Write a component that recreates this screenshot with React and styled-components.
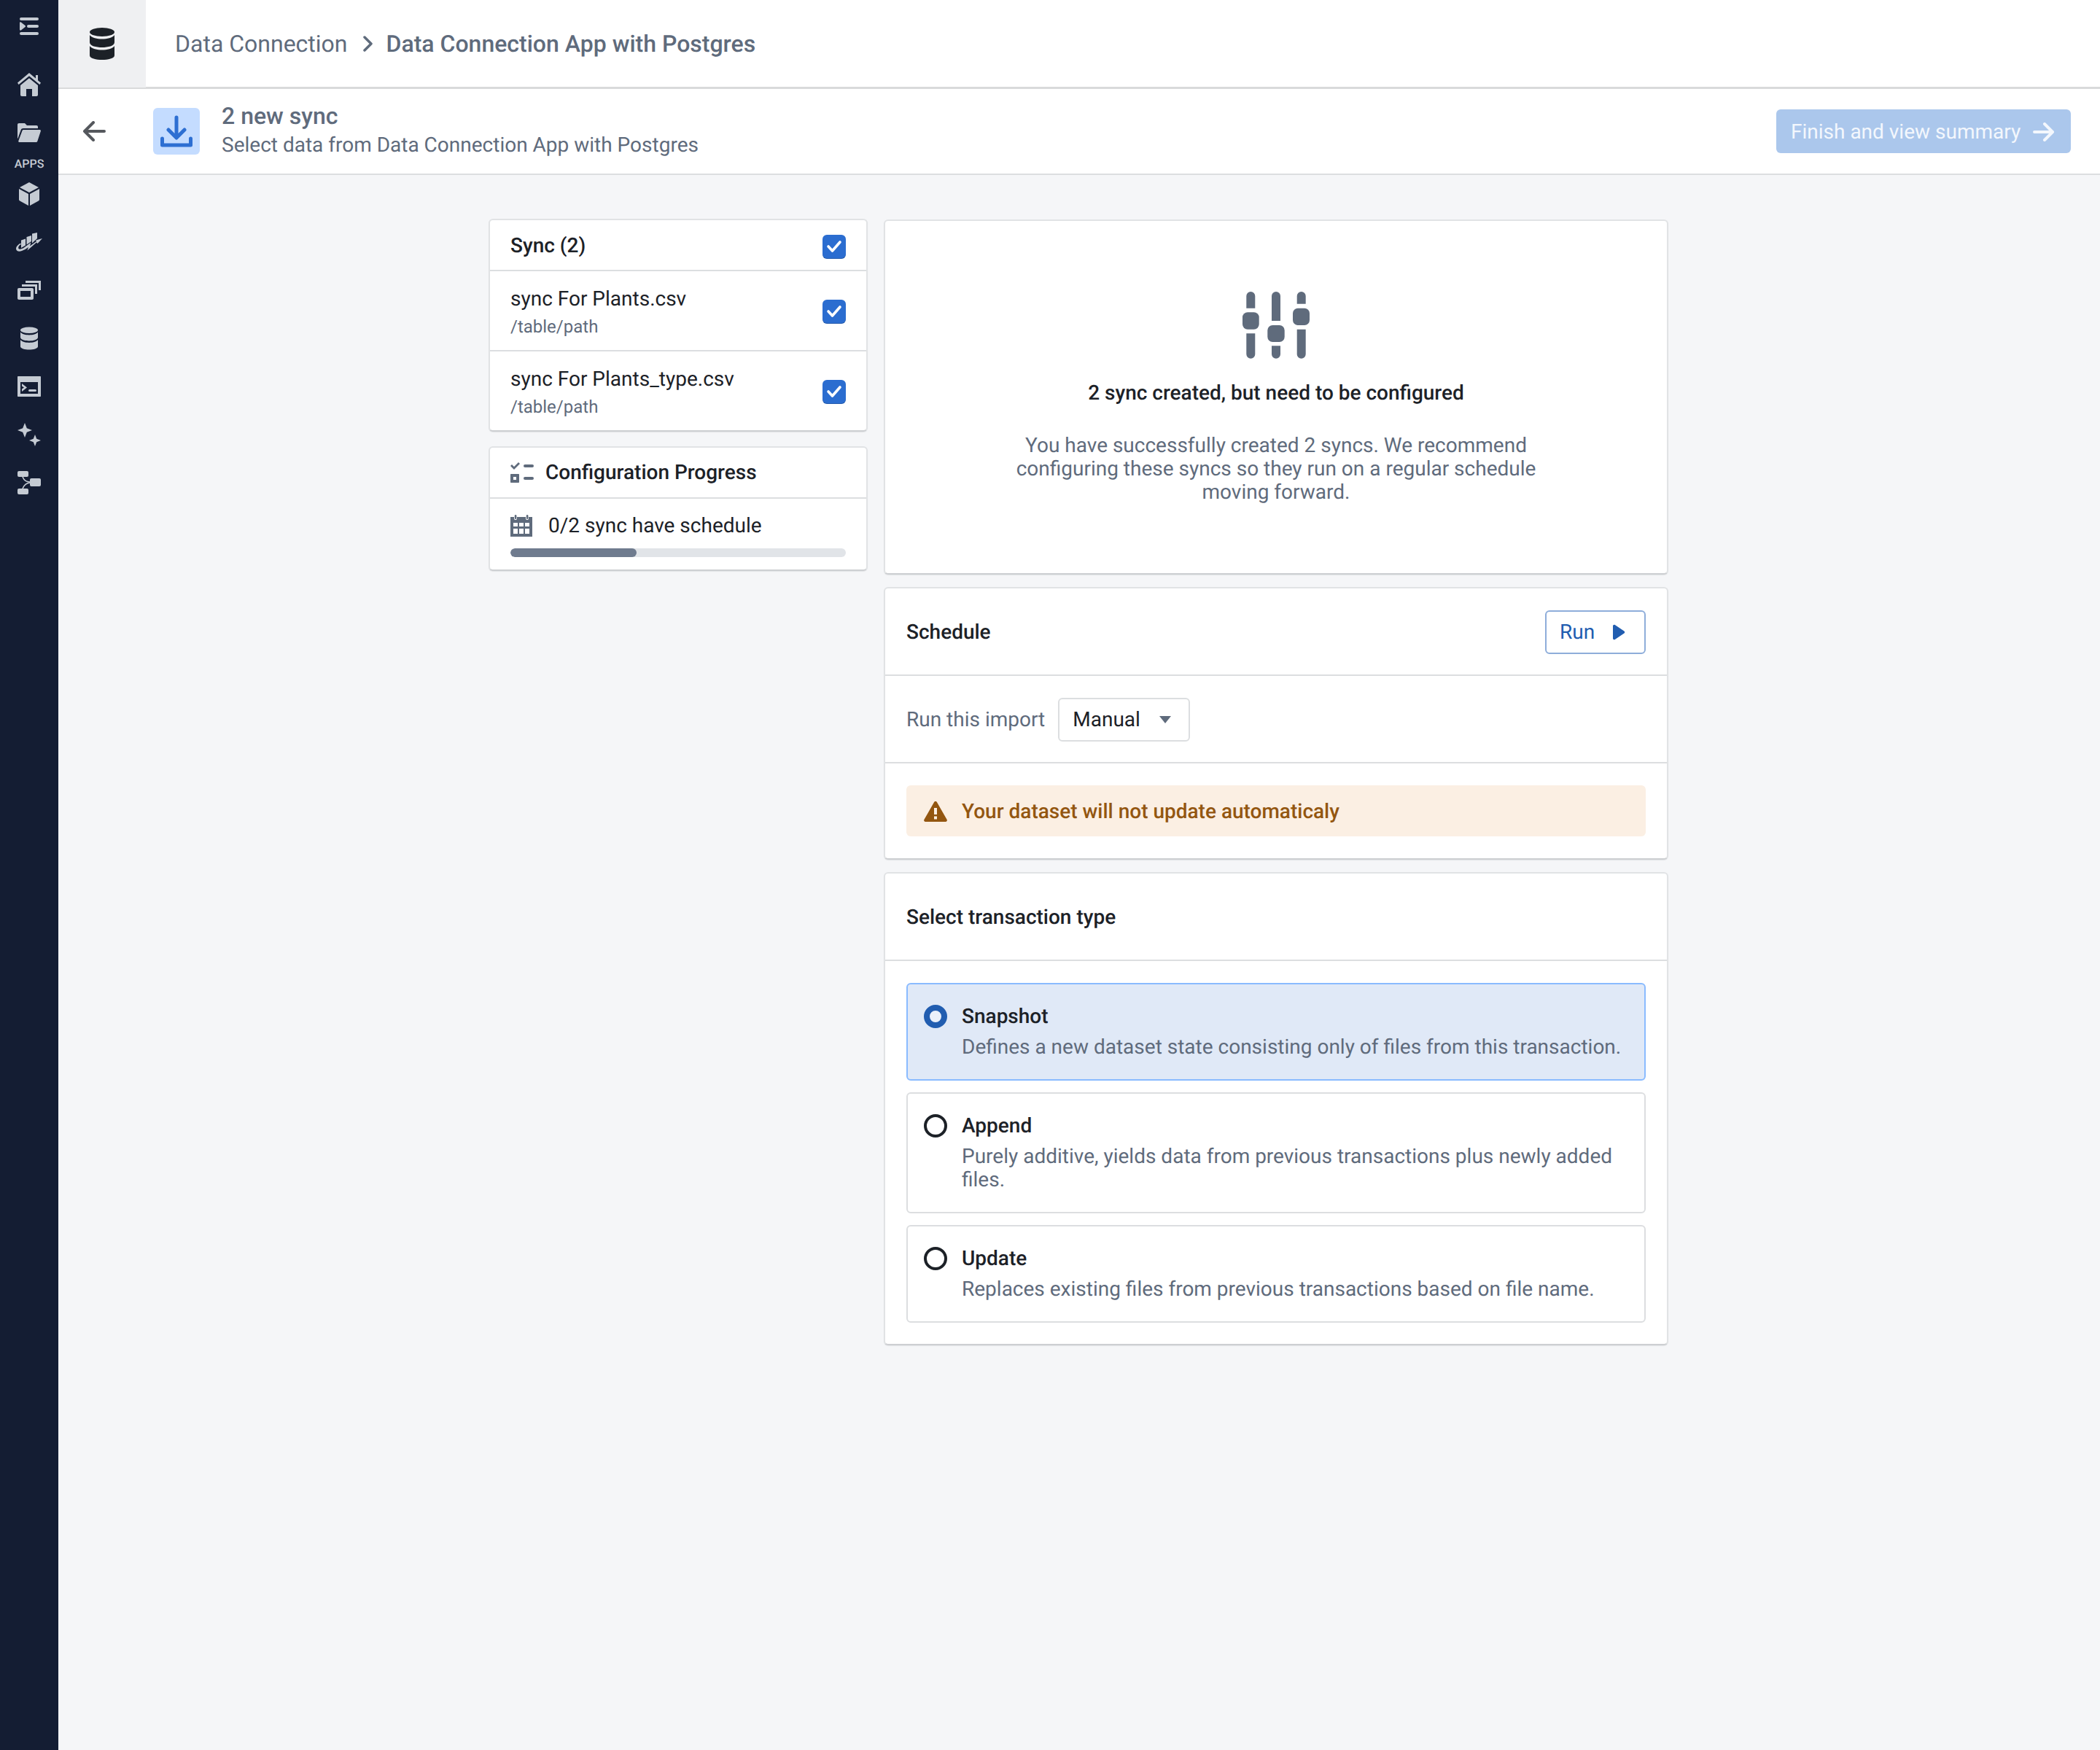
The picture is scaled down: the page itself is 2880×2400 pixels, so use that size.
import React from 'react'
import styled, { createGlobalStyle } from 'styled-components'

const GlobalStyle = createGlobalStyle`
    * {
        box-sizing: border-box;
    }
    body {
        margin: 0;
        background: #f5f6f8;
        font-family: Roboto, "Liberation Sans", sans-serif;
        font-size: 28px;
        line-height: 32px;
        color: #1c2127;
        text-rendering: geometricPrecision;
    }
`

const Page = styled.div`
    display: flex;
    min-height: 2400px;
`

const Sidebar = styled.nav`
    flex: 0 0 80px;
    display: flex;
    flex-direction: column;
    align-items: center;
    padding-top: 3px;
    background: #141d33;
    color: #c5cbd3;
`

const NavItem = styled.div`
    width: 100%;
    height: 66px;
    flex: none;
    display: flex;
    align-items: center;
    justify-content: center;
    margin-bottom: ${props => props.$gap || 0}px;
`

const NavLabel = styled.div`
    height: 18px;
    font-size: 16px;
    line-height: 20px;
    font-weight: 500;
    color: #c5cbd3;
`

const Main = styled.div`
    flex: 1;
    min-width: 0;
    display: flex;
    flex-direction: column;
`

const TopBar = styled.header`
    height: 122px;
    flex: none;
    display: flex;
    align-items: center;
    background: #fff;
    border-bottom: 3px solid #d9dadb;
`

const AppCell = styled.div`
    width: 120px;
    height: 120px;
    align-self: flex-start;
    display: flex;
    align-items: center;
    justify-content: center;
    background: #eff0f2;
    color: #1c2127;
`

const Crumbs = styled.div`
    display: flex;
    align-items: center;
    margin-left: 40px;
    font-size: 32px;
    line-height: 40px;
    color: #5f6b7c;
`

const CrumbCurrent = styled.span`
    font-weight: 500;
`

const CrumbSeparator = styled.span`
    display: flex;
    margin: 0 19px 0 20px;
`

const SubHeader = styled.div`
    height: 118px;
    flex: none;
    display: flex;
    align-items: center;
    padding: 0 40px 0 34px;
    background: #fff;
    border-bottom: 2px solid #dcdee0;
`

const BackButton = styled.div`
    width: 32px;
    display: flex;
    color: #55585d;
`

const Tile = styled.div`
    width: 64px;
    height: 64px;
    margin-left: 64px;
    display: flex;
    align-items: center;
    justify-content: center;
    border-radius: 6px;
    background: #c4dcff;
    color: #2d6fd2;
`

const HeaderText = styled.div`
    flex: 1;
    margin-left: 30px;
`

const HeaderTitle = styled.div`
    margin-bottom: 4px;
    font-size: 32px;
    line-height: 34px;
    font-weight: 500;
    color: #5f6b7c;
`

const HeaderSub = styled.div`
    font-size: 28px;
    line-height: 38px;
    color: #5f6b7c;
`

const FinishButton = styled.div`
    width: 404px;
    height: 60px;
    display: flex;
    align-items: center;
    justify-content: space-between;
    padding: 1px 22px 0 20px;
    border-radius: 6px;
    background: #abc7ec;
    color: #f3f7fd;
    font-size: 28px;
`

const Content = styled.main`
    flex: 1;
    display: flex;
    justify-content: center;
    align-items: flex-start;
    gap: 22px;
    padding: 60px 2px 0 0;
`

const Column = styled.div`
    width: ${props => props.$width}px;
    margin-top: ${props => props.$top || 0}px;
    display: flex;
    flex-direction: column;
    gap: ${props => props.$gap}px;
`

const Card = styled.section`
    background: #fff;
    border: 2px solid #e1e3e5;
    border-bottom-color: #cdcfd2;
    border-radius: 6px;
    box-shadow: 0 1px 1px rgba(17, 20, 24, 0.08);
`

const ListHeader = styled.div`
    height: 70px;
    display: flex;
    align-items: center;
    justify-content: space-between;
    padding: 2px 28px 0;
    border-bottom: 2px solid #dcdee0;
    font-weight: 500;
`

const ListRow = styled.div`
    height: ${props => (props.$last ? 108 : 110)}px;
    display: flex;
    align-items: center;
    justify-content: space-between;
    padding: 0 28px;
    border-bottom: ${props => (props.$last ? 'none' : '2px solid #dcdee0')};
`

const RowTitle = styled.div`
    line-height: 44px;
`

const RowPath = styled.div`
    font-size: 24px;
    line-height: 32px;
    color: #5f6b7c;
`

const Checkbox = styled.div`
    width: 32px;
    height: 33px;
    flex: none;
    margin-top: 2px;
    display: flex;
    align-items: center;
    justify-content: center;
    border-radius: 6px;
    background: #2b6dd0;
    box-shadow: inset 0 -1px 0 rgba(17, 20, 24, 0.2);
    color: #fff;
`

const ProgressHeader = styled.div`
    height: 70px;
    display: flex;
    align-items: center;
    gap: 16px;
    padding: 0 28px;
    border-bottom: 2px solid #dcdee0;
    font-weight: 500;
    color: #5f6b7c;
`

const ProgressTitle = styled.span`
    color: #1c2127;
`

const ProgressBody = styled.div`
    padding: 17px 28px;
`

const ProgressLine = styled.div`
    display: flex;
    align-items: center;
    gap: 22px;
    height: 40px;
    margin-bottom: 11px;
`

const ProgressIcon = styled.span`
    display: flex;
    color: #5f6b7c;
`

const Track = styled.div`
    height: 12px;
    border-radius: 6px;
    background: #e1e4e8;
    overflow: hidden;
`

const Fill = styled.div`
    height: 100%;
    border-radius: 6px;
    background: #6f7b8e;
`

const EmptyState = styled.div`
    height: 483px;
    display: flex;
    flex-direction: column;
    align-items: center;
    padding-top: 97px;
    text-align: center;
    color: #5f6b7c;
`

const EmptyTitle = styled.div`
    margin: 31px 0 40px;
    font-weight: 500;
    line-height: 32px;
    color: #1c2127;
`

const EmptyText = styled.div`
    width: 740px;
    line-height: 32px;
`

const SectionHeader = styled.div`
    height: 120px;
    display: flex;
    align-items: center;
    justify-content: space-between;
    padding: 2px 29px 0;
    border-bottom: 2px solid #dcdee0;
    font-weight: 500;
`

const RunButton = styled.div`
    width: 138px;
    height: 60px;
    display: flex;
    align-items: center;
    justify-content: space-between;
    padding: 0 26px 0 18px;
    border: 2px solid #8eadda;
    border-radius: 6px;
    font-weight: 400;
    color: #215db0;
`

const ImportRow = styled.div`
    height: 120px;
    display: flex;
    align-items: center;
    gap: 18px;
    padding: 2px 29px 0;
    border-bottom: 2px solid #dcdee0;
    color: #5f6b7c;
`

const SelectBox = styled.div`
    width: 181px;
    height: 60px;
    display: flex;
    align-items: center;
    justify-content: space-between;
    padding: 0 24px 0 18px;
    border: 2px solid #dcdee0;
    border-radius: 6px;
    color: #1c2127;
`

const Caret = styled.span`
    display: flex;
    color: #5f6b7c;
`

const BannerWrap = styled.div`
    padding: 30px 29px;
`

const Banner = styled.div`
    height: 70px;
    display: flex;
    align-items: center;
    gap: 20px;
    padding: 2px 24px 0;
    border-radius: 6px;
    background: #fbefe3;
    color: #935610;
    font-weight: 500;
`

const Options = styled.div`
    display: flex;
    flex-direction: column;
    gap: 16px;
    padding: 30px 29px 29px;
`

const Option = styled.div`
    display: flex;
    align-items: flex-start;
    gap: 20px;
    padding: 28px 22px 28px;
    border: 2px solid ${props => (props.$selected ? '#8abbff' : '#dcdee0')};
    border-radius: 6px;
    background: ${props => (props.$selected ? '#e0e9f7' : '#fff')};
`

const Radio = styled.span`
    width: 32px;
    height: 32px;
    flex: none;
    border-radius: 50%;
    background: ${props => (props.$selected ? '#eaf0fa' : '#fff')};
    border: ${props => (props.$selected ? '8px solid #215db0' : '4px solid #1c2127')};
`

const OptionTitle = styled.div`
    font-weight: 500;
    line-height: 32px;
    margin-bottom: 10px;
`

const OptionText = styled.div`
    line-height: 32px;
    color: #5f6b7c;
`

const MenuIcon = () => (
    <svg width="26" height="24" viewBox="0 0 26 24" fill="currentColor">
        <rect x="0" y="0" width="26" height="4" rx="2" />
        <rect x="10" y="10" width="16" height="4" rx="2" />
        <rect x="0" y="20" width="26" height="4" rx="2" />
        <path d="M0 7.5 C0 6.5 1 6 1.8 6.6 L7.5 11 C8.2 11.5 8.2 12.5 7.5 13 L1.8 17.4 C1 18 0 17.5 0 16.5 Z" />
    </svg>
)

const HomeIcon = () => (
    <svg width="32" height="32" viewBox="0 0 32 32" fill="currentColor">
        <path d="M16 0 L25 7.6 V3 H28 V10.2 L32 13.6 L30.4 16 L16 4.2 L1.6 16 L0 13.6 Z" />
        <path d="M16 7.2 L28 17 V30 C28 31.2 27.2 32 26 32 H20 V22 H12 V32 H6 C4.8 32 4 31.2 4 30 V17 Z" />
    </svg>
)

const FolderIcon = () => (
    <svg width="32" height="26" viewBox="0 0 32 26" fill="currentColor">
        <path d="M0 2 C0 .8 .8 0 2 0 H10 L13 3 H26 C27.2 3 28 3.8 28 5 V7 H8 C6.2 7 5.2 7.8 4.6 9.4 L.6 20.6 L0 21 Z" />
        <path d="M8.6 9 H30.4 C31.6 9 32.2 10 31.8 11 L27.4 24.4 C27 25.4 26.2 26 25.2 26 H2.6 C1.6 26 1 25 1.4 24 L6.4 10.4 C6.8 9.4 7.6 9 8.6 9 Z" />
    </svg>
)

const CubeIcon = () => (
    <svg width="28" height="32" viewBox="0 0 28 32" fill="currentColor">
        <path d="M14 0 L27 7 L14 14 L1 7 Z" />
        <path d="M0 9 L13 16 V32 L1.2 25.6 C.4 25.2 0 24.6 0 23.8 Z" />
        <path d="M28 9 L15 16 V32 L26.8 25.6 C27.6 25.2 28 24.6 28 23.8 Z" />
    </svg>
)

const ChartIcon = () => (
    <svg width="36" height="26" viewBox="0 0 36 26" fill="currentColor">
        <path d="M7 10.5 L13 8.5 V17.5 L7 21 Z" />
        <path d="M14.5 6 L21 4 V12 L14.5 16.5 Z" />
        <path d="M22 1.5 L29 0 V8 L22 14.5 Z" />
        <path d="M6.5 14.5 C2 16.5 0 20 0 22 C0 25.5 4 26.5 8 25 C11 24 14 22 17 20 L15.5 24.5 L28 13.5 L29.5 15 L36 8 L27 10.5 L28 12 L19 18.5 L20.5 13.5 L11 20.5 C8 22.5 4.5 23.5 3.5 22 C2.5 20.5 4 17 6.5 16.5 Z" />
    </svg>
)

const StackIcon = () => (
    <svg width="32" height="26" viewBox="0 0 32 26" fill="currentColor">
        <path fillRule="evenodd" d="M2 10 H20 C21.2 10 22 10.8 22 12 V24 C22 25.2 21.2 26 20 26 H2 C.8 26 0 25.2 0 24 V12 C0 10.8 .8 10 2 10 Z M4 14 V22 H18 V14 Z" />
        <path d="M6 5 H27 V18 H24 V8 H6 Z" />
        <path d="M11 0 H32 V13 H29 V3 H11 Z" />
    </svg>
)

const DatabaseIcon = ({ width, height }) => (
    <svg width={width} height={height} viewBox="0 0 34 44" fill="currentColor">
        <ellipse cx="17" cy="6" rx="17" ry="6" />
        <path d="M0 10 C3 14 10 15.5 17 15.5 C24 15.5 31 14 34 10 V20 C34 25 25 27 17 27 C9 27 0 25 0 20 Z" />
        <path d="M0 25 C3 29 10 30.5 17 30.5 C24 30.5 31 29 34 25 V38 C34 42 25 44 17 44 C9 44 0 42 0 38 Z" />
    </svg>
)

const TerminalIcon = () => (
    <svg width="32" height="28" viewBox="0 0 32 28" fill="currentColor">
        <path fillRule="evenodd" d="M1 0 H31 C31.6 0 32 .4 32 1 V27 C32 27.6 31.6 28 31 28 H1 C.4 28 0 27.6 0 27 V1 C0 .4 .4 0 1 0 Z M4 8 V24 H28 V8 Z" />
        <path d="M6 10 L13 15.5 L6 21 V17.5 L9 15.5 L6 13.5 Z" />
        <rect x="15" y="18" width="11" height="3" rx="1.5" />
    </svg>
)

const SparkIcon = () => (
    <svg width="32" height="32" viewBox="0 0 32 32" fill="currentColor">
        <path d="M10 0 L12.8 7.2 L20 10 L12.8 12.8 L10 20 L7.2 12.8 L0 10 L7.2 7.2 Z" />
        <path d="M24 16 L26.2 21.8 L32 24 L26.2 26.2 L24 32 L21.8 26.2 L16 24 L21.8 21.8 Z" />
    </svg>
)

const FlowIcon = () => (
    <svg width="32" height="32" viewBox="0 0 32 32" fill="currentColor">
        <rect x="0" y="0" width="15" height="8" rx="2" />
        <rect x="0" y="24" width="15" height="8" rx="2" />
        <rect x="17" y="10" width="15" height="11" rx="2" />
        <path d="M7 8 C9 13 12 15 17 15 M7 24 C9 19 12 16.5 17 16" fill="none" stroke="currentColor" strokeWidth="1.6" />
    </svg>
)

const BackArrow = () => (
    <svg width="32" height="28" viewBox="0 0 32 28" fill="none" stroke="currentColor" strokeWidth="4" strokeLinecap="round" strokeLinejoin="round">
        <path d="M2 14 H29 M14 2 L2 14 L14 26" />
    </svg>
)

const DownloadIcon = () => (
    <svg width="44" height="44" viewBox="0 0 44 44" fill="none" stroke="currentColor" strokeWidth="5" strokeLinecap="round" strokeLinejoin="round">
        <path d="M22 3 V30 M11 20 L22 31 L33 20" />
        <path d="M2.5 32 V41 H41.5 V32" />
    </svg>
)

const ChevronRight = () => (
    <svg width="14" height="22" viewBox="0 0 14 22" fill="none" stroke="#5f6b7c" strokeWidth="3.5" strokeLinecap="round" strokeLinejoin="round">
        <path d="M3 2 L12 11 L3 20" />
    </svg>
)

const ForwardArrow = () => (
    <svg width="30" height="26" viewBox="0 0 30 26" fill="none" stroke="currentColor" strokeWidth="4" strokeLinecap="round" strokeLinejoin="round">
        <path d="M2 13 H27 M16 2 L27 13 L16 24" />
    </svg>
)

const CheckMark = () => (
    <svg width="22" height="18" viewBox="0 0 22 18" fill="none" stroke="currentColor" strokeWidth="3.6" strokeLinecap="round" strokeLinejoin="round">
        <path d="M3 9 L8.5 15 L19 3" />
    </svg>
)

const ChecklistIcon = () => (
    <svg width="32" height="28" viewBox="0 0 32 28" fill="currentColor">
        <path d="M0 5 L2 3 L5 6 L11 0 L13 2 L5 10 Z" />
        <rect x="18" y="3" width="14" height="4" rx="2" />
        <rect x="18" y="20" width="14" height="4" rx="2" />
        <path fillRule="evenodd" d="M1 16 H11 C11.6 16 12 16.4 12 17 V27 C12 27.6 11.6 28 11 28 H1 C.4 28 0 27.6 0 27 V17 C0 16.4 .4 16 1 16 Z M4 20 V24 H8 V20 Z" />
    </svg>
)

const CalendarIcon = () => (
    <svg width="30" height="30" viewBox="0 0 30 30" fill="currentColor">
        <path fillRule="evenodd" d="M0 3 H5 V5 C5 6.4 6 7 7 7 C8 7 9 6.4 9 5 V3 H21 V5 C21 6.4 22 7 23 7 C24 7 25 6.4 25 5 V3 H30 V30 H0 Z M4 11 V16 H10 V11 Z M12 11 V16 H18 V11 Z M20 11 V16 H26 V11 Z M4 19 V26 H10 V19 Z M12 19 V26 H18 V19 Z M20 19 V26 H26 V19 Z" />
        <rect x="5.8" y="0" width="2.6" height="6" rx="1.3" />
        <rect x="21.8" y="0" width="2.6" height="6" rx="1.3" />
    </svg>
)

const SlidersIcon = () => (
    <svg width="92" height="92" viewBox="0 0 92 92" fill="#5f6b7c">
        <path d="M5.3 6 a6 6 0 0 1 12 0 V22.7 H5.3 Z" />
        <rect x="0" y="28.3" width="22.7" height="23.4" rx="7" />
        <path d="M5.3 57.3 H17.3 V85.7 a6 6 0 0 1 -12 0 Z" />
        <path d="M40 6 a6 6 0 0 1 12 0 V40 H40 Z" />
        <rect x="34.3" y="46" width="23.4" height="23" rx="7" />
        <path d="M40 74.3 H52 V85.7 a6 6 0 0 1 -12 0 Z" />
        <path d="M74.7 6 a6 6 0 0 1 12 0 V16.7 H74.7 Z" />
        <rect x="69" y="22.7" width="23" height="23.3" rx="7" />
        <path d="M74.7 51.7 H86.7 V85.7 a6 6 0 0 1 -12 0 Z" />
    </svg>
)

const PlayIcon = () => (
    <svg width="18" height="22" viewBox="0 0 18 22" fill="currentColor">
        <path d="M1 2.5 C1 1 2.6 .2 3.8 1 L16.4 9.4 C17.5 10.2 17.5 11.8 16.4 12.6 L3.8 21 C2.6 21.8 1 21 1 19.5 Z" />
    </svg>
)

const CaretDown = () => (
    <svg width="16" height="10" viewBox="0 0 16 10" fill="currentColor">
        <path d="M0 0 H16 L8 10 Z" />
    </svg>
)

const WarningIcon = () => (
    <svg width="32" height="28" viewBox="0 0 32 28" fill="currentColor">
        <path fillRule="evenodd" d="M16 0 C17 0 17.6 .6 18 1.2 L31.6 25 C32.4 26.4 31.4 28 30 28 H2 C.6 28 -.4 26.4 .4 25 L14 1.2 C14.4 .6 15 0 16 0 Z M14 9 V18 H18 V9 Z M14 20.5 V24.5 H18 V20.5 Z" />
    </svg>
)

const navItems = [
    <CubeIcon />,
    <ChartIcon />,
    <StackIcon />,
    <DatabaseIcon width={24} height={32} />,
    <TerminalIcon />,
    <SparkIcon />,
    <FlowIcon />
]

const syncs = [
    { name: 'sync For Plants.csv', path: '/table/path' },
    { name: 'sync For Plants_type.csv', path: '/table/path' }
]

const transactionTypes = [
    {
        title: 'Snapshot',
        text: 'Defines a new dataset state consisting only of files from this transaction.',
        selected: true
    },
    {
        title: 'Append',
        text: 'Purely additive, yields data from previous transactions plus newly added files.'
    },
    {
        title: 'Update',
        text: 'Replaces existing files from previous transactions based on file name.'
    }
]

export default function App() {
    return (
        <Page>
            <GlobalStyle />
            <Sidebar>
                <NavItem $gap={14}><MenuIcon /></NavItem>
                <NavItem><HomeIcon /></NavItem>
                <NavItem><FolderIcon /></NavItem>
                <NavLabel>APPS</NavLabel>
                {navItems.map((icon, i) => <NavItem key={i}>{icon}</NavItem>)}
            </Sidebar>
            <Main>
                <TopBar>
                    <AppCell><DatabaseIcon width={34} height={44} /></AppCell>
                    <Crumbs>
                        <span>Data Connection</span>
                        <CrumbSeparator><ChevronRight /></CrumbSeparator>
                        <CrumbCurrent>Data Connection App with Postgres</CrumbCurrent>
                    </Crumbs>
                </TopBar>
                <SubHeader>
                    <BackButton><BackArrow /></BackButton>
                    <Tile><DownloadIcon /></Tile>
                    <HeaderText>
                        <HeaderTitle>2 new sync</HeaderTitle>
                        <HeaderSub>Select data from Data Connection App with Postgres</HeaderSub>
                    </HeaderText>
                    <FinishButton>
                        <span>Finish and view summary</span>
                        <ForwardArrow />
                    </FinishButton>
                </SubHeader>
                <Content>
                    <Column $width={520} $gap={20}>
                        <Card>
                            <ListHeader>
                                <span>Sync (2)</span>
                                <Checkbox><CheckMark /></Checkbox>
                            </ListHeader>
                            {syncs.map((sync, i) => (
                                <ListRow key={sync.name} $last={i === syncs.length - 1}>
                                    <div>
                                        <RowTitle>{sync.name}</RowTitle>
                                        <RowPath>{sync.path}</RowPath>
                                    </div>
                                    <Checkbox><CheckMark /></Checkbox>
                                </ListRow>
                            ))}
                        </Card>
                        <Card>
                            <ProgressHeader>
                                <ChecklistIcon />
                                <ProgressTitle>Configuration Progress</ProgressTitle>
                            </ProgressHeader>
                            <ProgressBody>
                                <ProgressLine>
                                    <ProgressIcon><CalendarIcon /></ProgressIcon>
                                    <span>0/2 sync have schedule</span>
                                </ProgressLine>
                                <Track><Fill style={{ width: '37.5%' }} /></Track>
                            </ProgressBody>
                        </Card>
                    </Column>
                    <Column $width={1076} $gap={17} $top={1}>
                        <Card>
                            <EmptyState>
                                <SlidersIcon />
                                <EmptyTitle>2 sync created, but need to be configured</EmptyTitle>
                                <EmptyText>
                                    You have successfully created 2 syncs. We recommend configuring these syncs so they run on a regular schedule moving forward.
                                </EmptyText>
                            </EmptyState>
                        </Card>
                        <Card>
                            <SectionHeader>
                                <span>Schedule</span>
                                <RunButton>
                                    <span>Run</span>
                                    <PlayIcon />
                                </RunButton>
                            </SectionHeader>
                            <ImportRow>
                                <span>Run this import</span>
                                <SelectBox>
                                    <span>Manual</span>
                                    <Caret><CaretDown /></Caret>
                                </SelectBox>
                            </ImportRow>
                            <BannerWrap>
                                <Banner>
                                    <WarningIcon />
                                    <span>Your dataset will not update automaticaly</span>
                                </Banner>
                            </BannerWrap>
                        </Card>
                        <Card>
                            <SectionHeader>Select transaction type</SectionHeader>
                            <Options>
                                {transactionTypes.map(option => (
                                    <Option key={option.title} $selected={option.selected}>
                                        <Radio $selected={option.selected} />
                                        <div>
                                            <OptionTitle>{option.title}</OptionTitle>
                                            <OptionText>{option.text}</OptionText>
                                        </div>
                                    </Option>
                                ))}
                            </Options>
                        </Card>
                    </Column>
                </Content>
            </Main>
        </Page>
    )
}
